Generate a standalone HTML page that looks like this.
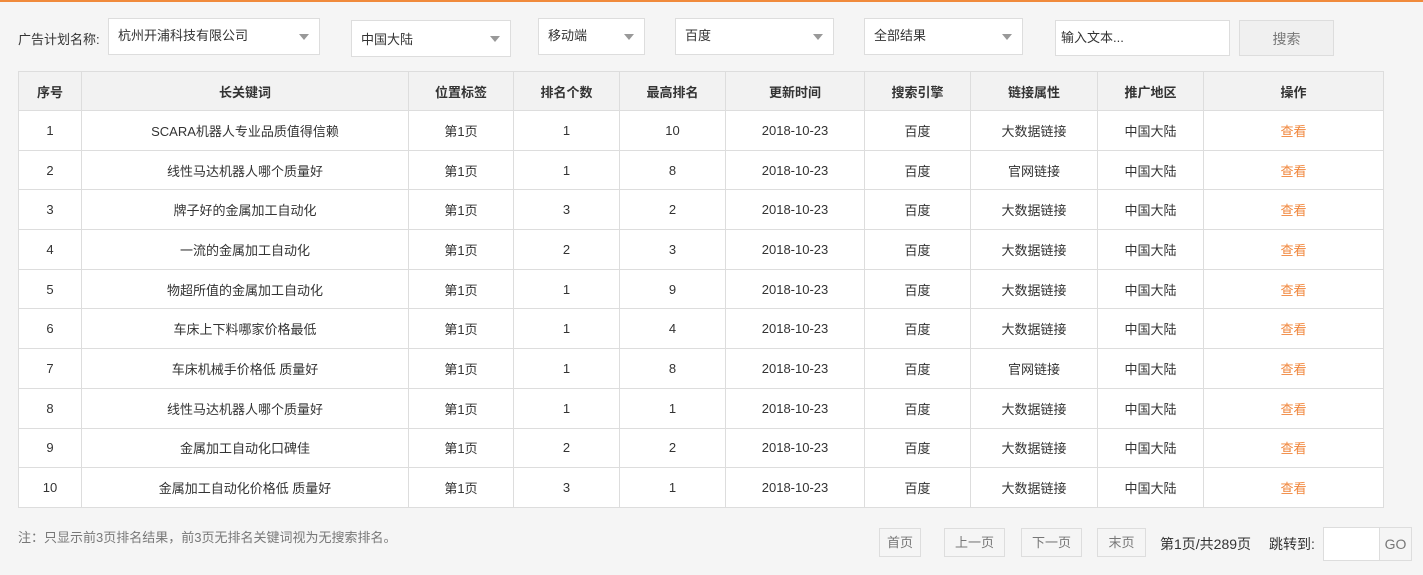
<!DOCTYPE html>
<html><head><meta charset="utf-8"><style>
*{box-sizing:border-box;margin:0;padding:0}
body{width:1423px;height:575px;background:#f5f5f5;font-family:"Liberation Sans","Noto Sans CJK SC",sans-serif;font-size:13px;color:#333;position:relative;overflow:hidden}
.a{position:absolute}
.sel{position:absolute;background:#fff;border:1px solid #ddd;padding-left:9px;line-height:34px;font-size:13px;color:#333}
.sel:after{content:"";position:absolute;right:10px;top:15px;border-left:5px solid transparent;border-right:5px solid transparent;border-top:6px solid #999}
table{position:absolute;left:18px;top:71px;border-collapse:collapse;background:#fff;table-layout:fixed}
td,th{border:1px solid #ddd;text-align:center;height:39.7px;font-size:13px;color:#333;padding:0}
th{background:#f2f2f2;font-weight:bold;height:39px}
td.o{color:#f0853a}
.pb{position:absolute;top:528px;height:29px;border:1px solid #ddd;line-height:27px;text-align:center;color:#777;font-size:13px}
</style></head><body>
<div class="a" style="left:0;top:0;width:1423px;height:2px;background:#f08a3c"></div>
<div class="a" style="left:18px;top:29px;">广告计划名称:</div>
<div class="sel" style="left:108px;top:18px;width:212px;height:37px;line-height:34px">杭州开浦科技有限公司</div>
<div class="sel" style="left:351px;top:20px;width:160px;height:37px;line-height:38px">中国大陆</div>
<div class="sel" style="left:538px;top:18px;width:107px;height:37px">移动端</div>
<div class="sel" style="left:675px;top:18px;width:159px;height:37px">百度</div>
<div class="sel" style="left:864px;top:18px;width:159px;height:37px">全部结果</div>
<div class="a" style="left:1055px;top:20px;width:175px;height:36px;background:#fff;border:1px solid #ddd;padding-left:5px;line-height:34px">输入文本...</div>
<div class="a" style="left:1239px;top:20px;width:95px;height:36px;background:#f0f0f0;border:1px solid #ddd;text-align:center;line-height:36px;color:#777;font-size:14px">搜索</div>
<table>
<colgroup><col style="width:63px"><col style="width:327px"><col style="width:105px"><col style="width:106px"><col style="width:106px"><col style="width:139px"><col style="width:106px"><col style="width:127px"><col style="width:106px"><col style="width:180px"></colgroup>
<tr><th>序号</th><th>长关键词</th><th>位置标签</th><th>排名个数</th><th>最高排名</th><th>更新时间</th><th>搜索引擎</th><th>链接属性</th><th>推广地区</th><th>操作</th></tr>
<tr><td>1</td><td>SCARA机器人专业品质值得信赖</td><td>第1页</td><td>1</td><td>10</td><td>2018-10-23</td><td>百度</td><td>大数据链接</td><td>中国大陆</td><td class="o">查看</td></tr>
<tr><td>2</td><td>线性马达机器人哪个质量好</td><td>第1页</td><td>1</td><td>8</td><td>2018-10-23</td><td>百度</td><td>官网链接</td><td>中国大陆</td><td class="o">查看</td></tr>
<tr><td>3</td><td>牌子好的金属加工自动化</td><td>第1页</td><td>3</td><td>2</td><td>2018-10-23</td><td>百度</td><td>大数据链接</td><td>中国大陆</td><td class="o">查看</td></tr>
<tr><td>4</td><td>一流的金属加工自动化</td><td>第1页</td><td>2</td><td>3</td><td>2018-10-23</td><td>百度</td><td>大数据链接</td><td>中国大陆</td><td class="o">查看</td></tr>
<tr><td>5</td><td>物超所值的金属加工自动化</td><td>第1页</td><td>1</td><td>9</td><td>2018-10-23</td><td>百度</td><td>大数据链接</td><td>中国大陆</td><td class="o">查看</td></tr>
<tr><td>6</td><td>车床上下料哪家价格最低</td><td>第1页</td><td>1</td><td>4</td><td>2018-10-23</td><td>百度</td><td>大数据链接</td><td>中国大陆</td><td class="o">查看</td></tr>
<tr><td>7</td><td>车床机械手价格低 质量好</td><td>第1页</td><td>1</td><td>8</td><td>2018-10-23</td><td>百度</td><td>官网链接</td><td>中国大陆</td><td class="o">查看</td></tr>
<tr><td>8</td><td>线性马达机器人哪个质量好</td><td>第1页</td><td>1</td><td>1</td><td>2018-10-23</td><td>百度</td><td>大数据链接</td><td>中国大陆</td><td class="o">查看</td></tr>
<tr><td>9</td><td>金属加工自动化口碑佳</td><td>第1页</td><td>2</td><td>2</td><td>2018-10-23</td><td>百度</td><td>大数据链接</td><td>中国大陆</td><td class="o">查看</td></tr>
<tr><td>10</td><td>金属加工自动化价格低 质量好</td><td>第1页</td><td>3</td><td>1</td><td>2018-10-23</td><td>百度</td><td>大数据链接</td><td>中国大陆</td><td class="o">查看</td></tr>
</table>
<div class="a" style="left:18px;top:527px;color:#777;font-size:13px">注：只显示前3页排名结果，前3页无排名关键词视为无搜索排名。</div>
<div class="pb" style="left:879px;width:42px">首页</div>
<div class="pb" style="left:944px;width:61px">上一页</div>
<div class="pb" style="left:1021px;width:61px">下一页</div>
<div class="pb" style="left:1097px;width:49px">末页</div>
<div class="a" style="left:1160px;top:534px;color:#333;font-size:14px">第1页/共289页</div>
<div class="a" style="left:1269px;top:534px;color:#333;font-size:14px">跳转到:</div>
<div class="a" style="left:1323px;top:527px;width:89px;height:34px;border:1px solid #ddd;background:#fff"></div>
<div class="a" style="left:1379px;top:527px;width:33px;height:34px;border:1px solid #ddd;background:#f5f5f5;text-align:center;line-height:32px;color:#777;font-size:14px">GO</div>
</body></html>
